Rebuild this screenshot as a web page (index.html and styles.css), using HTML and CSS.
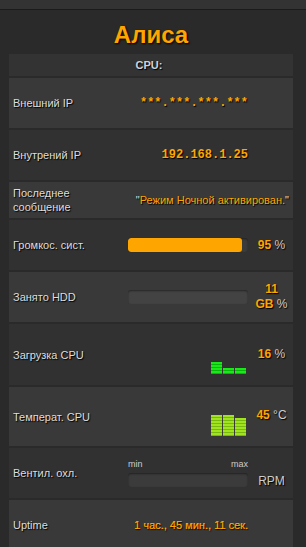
FILE: index.html
```html
<!DOCTYPE html>
<html lang="ru">
<head>
    <meta charset="UTF-8">
    <meta name="viewport" content="width=device-width, initial-scale=1.0">
    <title>Алиса</title>
    <link rel="stylesheet" href="styles.css">
</head>
<body>
    <div class="topbar"></div>
    <h1 class="title">Алиса</h1>

    <div class="panel">
        <div class="panel-head">CPU:</div>

        <div class="row row-light">
            <div class="label">Внешний IP</div>
            <div class="value mono">***.***.***.***</div>
            <div class="unit"></div>
        </div>

        <div class="row row-dark">
            <div class="label">Внутрений IP</div>
            <div class="value mono">192.168.1.25</div>
            <div class="unit"></div>
        </div>

        <div class="row row-light row-msg">
            <div class="label">Последнее<br>сообщение</div>
            <div class="value value-wide">"<span class="hl">Режим Ночной активирован.</span>"</div>
        </div>

        <div class="row row-dark">
            <div class="label">Громкос. сист.</div>
            <div class="value">
                <div class="bar"><div class="bar-fill" style="width: 95%"></div></div>
            </div>
            <div class="unit"><span class="num">95</span> %</div>
        </div>

        <div class="row row-light">
            <div class="label">Занято HDD</div>
            <div class="value">
                <div class="bar"></div>
            </div>
            <div class="unit unit-stack"><span class="num">11</span><br><span class="num">GB</span> %</div>
        </div>

        <div class="row row-dark row-tall">
            <div class="label">Загрузка CPU</div>
            <div class="value value-bottom">
                <div class="eq eq-cpu">
                    <div class="eq-bar" style="height: 12px"></div>
                    <div class="eq-bar" style="height: 6px"></div>
                    <div class="eq-bar" style="height: 6px"></div>
                </div>
            </div>
            <div class="unit"><span class="num">16</span> %</div>
        </div>

        <div class="row row-light row-temp">
            <div class="label">Температ. CPU</div>
            <div class="value value-bottom value-temp">
                <div class="eq eq-temp">
                    <div class="eq-bar" style="height: 21px"></div>
                    <div class="eq-bar" style="height: 21px"></div>
                    <div class="eq-bar" style="height: 18px"></div>
                </div>
            </div>
            <div class="unit unit-high"><span class="num">45</span> °C</div>
        </div>

        <div class="row row-dark">
            <div class="label">Вентил. охл.</div>
            <div class="value">
                <div class="scale"><span>min</span><span>max</span></div>
                <div class="bar"></div>
            </div>
            <div class="unit unit-bottom">RPM</div>
        </div>

        <div class="row row-light">
            <div class="label">Uptime</div>
            <div class="value"><span class="hl hl-strong">1 час., 45 мин., 11 сек.</span></div>
            <div class="unit"></div>
        </div>
    </div>
</body>
</html>
```

FILE: styles.css
```css
body {
    margin: 0;
    padding: 0;
    background-color: #2a2a2a;
    font-family: 'Liberation Sans', Arial, sans-serif;
    font-size: 11px;
    color: #dddddd;
}
.topbar {
    height: 9px;
    background-color: #333333;
    border-bottom: 1px solid #1b1b1b;
}
.title {
    margin: 11px 0 5px 0;
    width: 302px;
    text-align: center;
    font-size: 24px;
    line-height: 28px;
    font-weight: bold;
    color: #ffa500;
    text-shadow: 1px 1px 2px #000;
}
.panel {
    margin-left: 9px;
    width: 284px;
    display: flex;
    flex-direction: column;
    gap: 2px;
}
.panel-head {
    height: 22px;
    line-height: 22px;
    background-color: #333333;
    text-align: center;
    font-weight: bold;
    color: #cdd3dc;
    text-shadow: 1px 1px 1px #000;
    padding-right: 4px;
}
.row {
    display: grid;
    grid-template-columns: 115px 128px 41px;
    height: 50px;
    align-items: center;
}
.row-light {
    background-color: #393939;
}
.row-dark {
    background-color: #313131;
}
.row-msg {
    height: 36px;
}
.row-tall {
    height: 61px;
}
.row-temp {
    height: 59px;
}
.label {
    padding-left: 4px;
    line-height: 14px;
    text-shadow: 1px 1px 1px #000;
}
.value {
    padding: 0 4px;
    text-align: right;
}
.value-wide {
    grid-column: 2 / 4;
    color: #dddddd;
    text-shadow: 1px 1px 1px #000;
}
.value-bottom {
    align-self: end;
    padding-bottom: 11px;
}
.value-temp {
    padding-bottom: 10px;
}
.mono {
    font-family: 'Liberation Mono', 'Courier New', monospace;
    font-size: 12px;
    font-weight: bold;
    color: #ffa500;
    text-shadow: 1px 1px 1px #000;
}
.hl {
    color: #ffa500;
    text-shadow: 1px 1px 1px #000;
}
.hl-strong {
    text-shadow: 1px 1px 1px #000, 0.4px 0 0 #ffa500;
}
.unit {
    text-align: center;
    font-size: 12px;
    line-height: 15px;
    color: #cccccc;
    text-shadow: 1px 1px 1px #000;
    padding-right: 2px;
}
.unit-high {
    margin-top: -2px;
}
.unit-bottom {
    align-self: end;
    padding-bottom: 9px;
}
.num {
    color: #ffa500;
    font-weight: bold;
}
.bar {
    height: 14px;
    border-radius: 3px;
    background-color: rgba(255, 255, 255, 0.05);
    box-shadow: inset 0 1px 2px rgba(0, 0, 0, 0.45);
    overflow: hidden;
}
.bar-fill {
    height: 100%;
    background-color: #ffa500;
    border-radius: 3px;
}
.scale {
    display: flex;
    justify-content: space-between;
    font-size: 9px;
    line-height: 11px;
    color: #cccccc;
    margin-bottom: 3px;
}
.eq {
    display: flex;
    justify-content: flex-end;
    align-items: flex-end;
    gap: 1px;
    margin-right: 2px;
}
.eq-bar {
    width: 11px;
}
.eq-cpu .eq-bar {
    background: repeating-linear-gradient(to bottom, #17ea17 0, #17ea17 2px, #0db40d 2px, #0db40d 3px);
}
.eq-temp .eq-bar {
    background: repeating-linear-gradient(to bottom, #9fe41c 0, #9fe41c 2px, #79b810 2px, #79b810 3px);
}
```
